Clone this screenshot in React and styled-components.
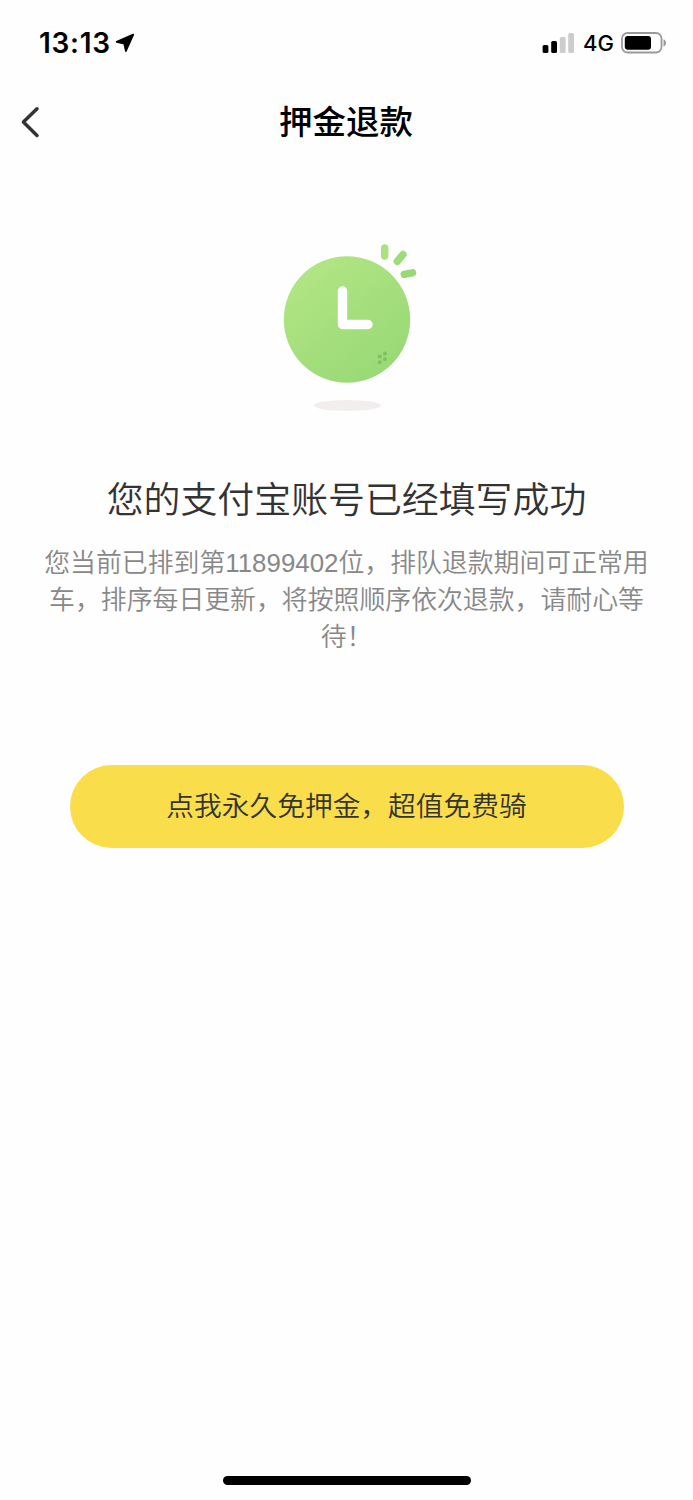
import styled, {createGlobalStyle} from 'styled-components';

const GlobalStyle = createGlobalStyle`
  * {
    box-sizing: border-box;
  }

  body {
    margin: 0;
    background: #fefefe;
  }
`;

const Screen = styled.div`
  display: flex;
  flex-direction: column;
  align-items: center;
  width: 100%;
  height: 1500px;
  background: #fefefe;
  font-family: 'Liberation Sans', 'Noto Sans CJK SC', sans-serif;
`;

const StatusBar = styled.div`
  display: flex;
  justify-content: space-between;
  align-items: center;
  width: 100%;
  height: 81px;
  padding: 4px 26px 0 39px;
  font-family: 'Inter', sans-serif;
  color: black;
`;

const StatusGroup = styled.div`
  display: flex;
  align-items: center;
`;

const Time = styled.span`
  width: 76px;
  font-size: 28px;
  font-weight: 600;
  line-height: 34px;
  letter-spacing: 0.7px;
`;

const Network = styled.span`
  width: 30px;
  margin: 0 8px 0 9px;
  font-size: 22px;
  font-weight: 450;
  line-height: 28px;
`;

const NavBar = styled.div`
  display: grid;
  grid-template-columns: 60px 1fr 60px;
  align-items: center;
  width: 100%;
  height: 81px;
`;

const BackButton = styled.button`
  display: flex;
  height: 81px;
  padding: 0 0 0 19.6px;
  align-items: center;
  border: none;
  background: none;
`;

const Title = styled.h1`
  margin: 0;
  padding: 2px 1px 0 0;
  text-align: center;
  font-size: 33.5px;
  font-weight: 500;
  line-height: 50px;
  color: black;
`;

const Content = styled.main`
  display: flex;
  flex: 1;
  flex-direction: column;
  align-items: center;
  width: 100%;
  padding-top: 78px;
`;

const Heading = styled.h2`
  margin: 62px 0 0;
  font-size: 36.9px;
  font-weight: 350;
  line-height: 56px;
  color: #333;
`;

const Description = styled.p`
  width: 610px;
  margin: 16px 0 0;
  text-align: center;
  font-size: 25.87px;
  line-height: 37px;
  font-weight: 350;
  color: #888;
`;

const Button = styled.button`
  width: 554px;
  height: 83px;
  margin-top: 109px;
  padding: 0;
  border: none;
  border-radius: 42px;
  background: #fadd4b;
  font-family: inherit;
  font-size: 27.72px;
  font-weight: 350;
  line-height: 40px;
  color: #333;
`;

const HomeIndicator = styled.div`
  width: 248px;
  height: 9px;
  margin-bottom: 15px;
  border-radius: 5px;
  background: black;
`;

const LocationArrow = () => (
    <svg width="20" height="20" viewBox="0 0 20 20">
        <path d="M18.2 1.6 L1.7 8.8 L9.3 10.7 L10.9 18 Z" stroke="black" strokeWidth="1.8" strokeLinejoin="round"/>
    </svg>
);

const Signal = () => (
    <svg width="32" height="20" viewBox="0 0 32 20">
        <rect x="0.6" y="12" width="5.8" height="8" rx="1.6"/>
        <rect x="9.2" y="8" width="5.8" height="12" rx="1.6"/>
        <rect x="17.8" y="4" width="5.8" height="16" rx="1.6" fill="#ccc"/>
        <rect x="26.2" y="0" width="5.8" height="20" rx="1.6" fill="#ccc"/>
    </svg>
);

const Battery = () => (
    <svg width="46" height="22" viewBox="0 0 46 22">
        <rect x="1" y="1" width="39.5" height="19.5" rx="5.5" fill="none" stroke="#999" strokeWidth="1.8"/>
        <rect x="3.8" y="3.9" width="26.2" height="13.8" rx="3"/>
        <path d="M42.5 7.2 C45.8 8.4 45.8 13.4 42.5 14.6 Z" fill="#999"/>
    </svg>
);

const BackIcon = () => (
    <svg width="20" height="32" viewBox="0 0 20 32">
        <path d="M17 2.8 L3.4 16 L17 29.4" fill="none" stroke="#333" strokeWidth="3.5" strokeLinecap="round" strokeLinejoin="round"/>
    </svg>
);

const Clock = () => (
    <svg width="160" height="171" viewBox="0 0 160 171">
        <defs>
            <linearGradient id="face" x1="0.1" y1="0" x2="0.9" y2="1">
                <stop offset="0" stopColor="#b3e784"/>
                <stop offset="1" stopColor="#97d775"/>
            </linearGradient>
        </defs>
        <circle cx="80" cy="79.5" r="63.2" fill="url(#face)"/>
        <path d="M75.5 51 V84.5 H101" fill="none" stroke="white" strokeWidth="9.4" strokeLinecap="round" strokeLinejoin="round"/>
        <g fill="none" strokeWidth="7.4" strokeLinecap="round">
            <path d="M117.7 8 V16" stroke="#a9e27f"/>
            <path d="M136 14.5 L130.3 21.4" stroke="#9edc79"/>
            <path d="M145.5 32.8 L137.2 34.4" stroke="#98d976"/>
        </g>
        <g fill="#7fbf60">
            <circle cx="118" cy="113.5" r="1.9"/>
            <circle cx="112.8" cy="116.4" r="1.9"/>
            <circle cx="118" cy="119.2" r="1.9"/>
            <circle cx="112.8" cy="122.2" r="1.9"/>
        </g>
        <ellipse cx="80.3" cy="165.5" rx="33.8" ry="5.5" fill="#f2eeee"/>
    </svg>
);

export default () => (
    <>
        <GlobalStyle/>
        <Screen>
            <StatusBar>
                <StatusGroup>
                    <Time>{'13:13'}</Time>
                    <LocationArrow/>
                </StatusGroup>
                <StatusGroup>
                    <Signal/>
                    <Network>{'4G'}</Network>
                    <Battery/>
                </StatusGroup>
            </StatusBar>
            <NavBar>
                <BackButton aria-label="返回"><BackIcon/></BackButton>
                <Title>{'押金退款'}</Title>
            </NavBar>
            <Content>
                <Clock/>
                <Heading>{'您的支付宝账号已经填写成功'}</Heading>
                <Description>{'您当前已排到第11899402位，排队退款期间可正常用车，排序每日更新，将按照顺序依次退款，请耐心等待！'}</Description>
                <Button>{'点我永久免押金，超值免费骑'}</Button>
            </Content>
            <HomeIndicator/>
        </Screen>
    </>
)
